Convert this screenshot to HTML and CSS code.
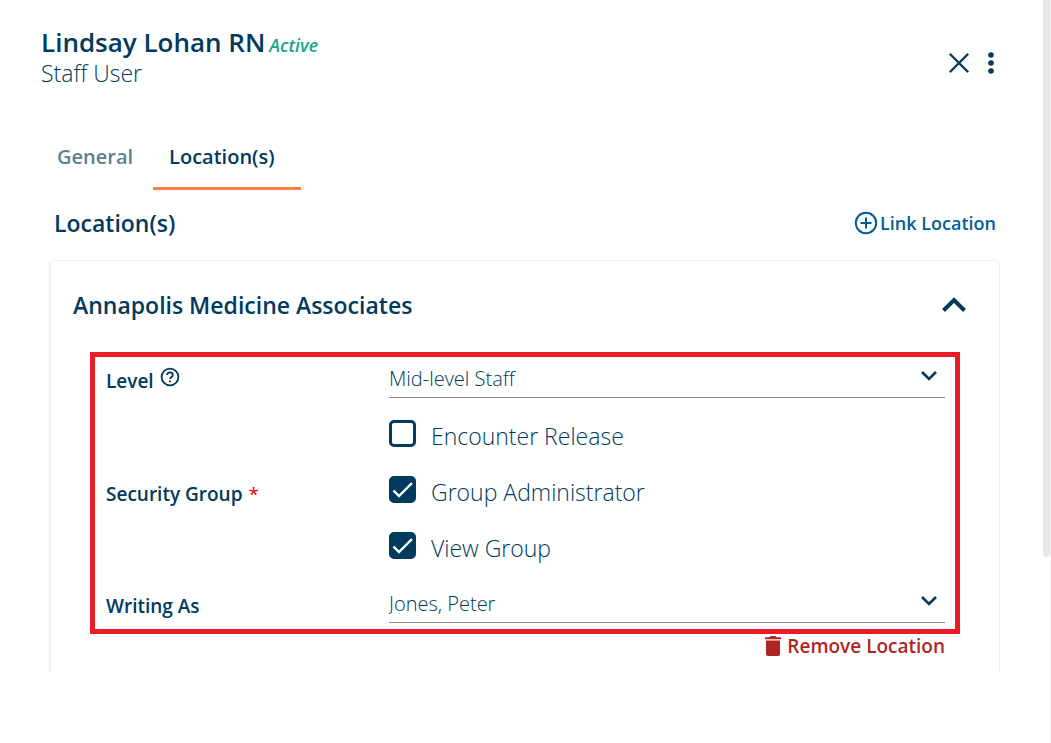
FILE: index.html
```html
<!DOCTYPE html>
<html lang="en">
<head>
  <meta charset="UTF-8">
  <meta name="viewport" content="width=device-width, initial-scale=1.0">
  <title>Staff User</title>
  <link rel="stylesheet" href="styles.css">
</head>
<body>
  <div class="page">
    <main class="content">
      <header class="header">
        <div>
          <div class="user-line">
            <h1 class="user-name">Lindsay Lohan RN</h1>
            <em class="status">Active</em>
          </div>
          <p class="user-role">Staff User</p>
        </div>
        <div class="header-actions">
          <button class="icon-btn" type="button" aria-label="Close">
            <svg width="20" height="20" viewBox="0 0 20 20" fill="none" stroke="currentColor" stroke-width="2.4" stroke-linecap="round"><path d="M1.5 1.5l17 17M18.5 1.5l-17 17"/></svg>
          </button>
          <button class="icon-btn" type="button" aria-label="More options">
            <svg width="6" height="22" viewBox="0 0 6 22" fill="currentColor"><circle cx="3" cy="3" r="2.8"/><circle cx="3" cy="11" r="2.8"/><circle cx="3" cy="19" r="2.8"/></svg>
          </button>
        </div>
      </header>

      <nav class="tabs">
        <button class="tab" type="button">General</button>
        <button class="tab tab-active" type="button">Location(s)</button>
      </nav>

      <div class="section-head">
        <h2 class="section-title">Location(s)</h2>
        <button class="link-btn" type="button">
          <svg width="24" height="24" viewBox="0 0 24 24" fill="none" stroke="currentColor" stroke-width="2"><circle cx="12" cy="12" r="10.2"/><path d="M12 6.5v11M6.5 12h11"/></svg>
          Link Location
        </button>
      </div>

      <div class="card-wrap">
        <section class="card">
          <div class="card-head">
            <h3 class="card-title">Annapolis Medicine Associates</h3>
            <button class="icon-btn" type="button" aria-label="Collapse">
              <svg width="24" height="16" viewBox="0 0 24 16" fill="none" stroke="currentColor" stroke-width="4"><path d="M1.5 13.5L12 3l10.5 10.5"/></svg>
            </button>
          </div>

          <form class="form">
            <div class="label-cell">
              <label for="level">Level</label>
              <svg class="help" width="20" height="20" viewBox="0 0 20 20" fill="none" stroke="currentColor" stroke-width="1.8"><circle cx="10" cy="10" r="8.4"/><path d="M7.2 8.1C7.2 6.3 8.4 5.4 10 5.4s2.8 1 2.8 2.5c0 2-2.7 2.2-2.7 4.2"/><path d="M10 13.4v1.9"/></svg>
            </div>
            <select class="select" id="level">
              <option>Mid-level Staff</option>
            </select>

            <div class="label-cell" id="security-label">Security Group <span class="required">*</span></div>
            <div class="checks" role="group" aria-labelledby="security-label">
              <label class="check"><input type="checkbox"><span>Encounter Release</span></label>
              <label class="check"><input type="checkbox" checked><span>Group Administrator</span></label>
              <label class="check"><input type="checkbox" checked><span>View Group</span></label>
            </div>

            <div class="label-cell"><label for="writing-as">Writing As</label></div>
            <select class="select" id="writing-as">
              <option>Jones, Peter</option>
            </select>
          </form>

          <div class="card-foot">
            <button class="remove-btn" type="button">
              <svg width="16" height="20" viewBox="0 0 16 20" fill="currentColor"><path d="M4.5 1.2L5.6 0h4.8l1.1 1.2H16v2H0v-2zM1 4.5h14V18a2 2 0 0 1-2 2H3a2 2 0 0 1-2-2z"/></svg>
              Remove Location
            </button>
          </div>
        </section>
      </div>
    </main>
    <div class="scroll-track"><div class="scroll-thumb"></div></div>
  </div>
</body>
</html>
```
FILE: styles.css
```css
* {
  box-sizing: border-box;
}
body {
  margin: 0;
  background: #fff;
  color: #003a5d;
  font-family: "Open Sans", "Noto Sans", sans-serif;
}
h1, h2, h3, p {
  margin: 0;
  font-weight: 600;
}
button {
  border: none;
  padding: 0;
  background: none;
  color: inherit;
  font: inherit;
  cursor: pointer;
}
svg {
  display: block;
  flex: none;
}
.page {
  display: flex;
  min-height: 100vh;
}
.content {
  flex: 1;
  min-width: 0;
  padding: 26px 43px 0 41px;
}

/* header */
.header {
  display: flex;
  justify-content: space-between;
  align-items: center;
  padding-right: 6px;
}
.user-line {
  display: flex;
  align-items: baseline;
  gap: 4px;
}
.user-name {
  font-size: 26px;
  line-height: 32px;
}
.status {
  color: #18a689;
  font-size: 18px;
  font-weight: 600;
}
.user-role {
  font-size: 23px;
  font-weight: 300;
  line-height: 30px;
}
.header-actions {
  display: flex;
  align-items: center;
  gap: 19px;
  padding-top: 12px;
}
.icon-btn {
  display: flex;
}

/* tabs */
.tabs {
  display: flex;
  margin-top: 38px;
}
.tab {
  height: 64px;
  padding: 0 20px 0 16px;
  border-bottom: 3px solid transparent;
  color: #5b7f95;
  font-size: 20px;
  font-weight: 600;
}
.tab-active {
  padding-right: 26px;
  border-bottom-color: #ff7f41;
  color: #003a5d;
}

.section-head {
  display: flex;
  justify-content: space-between;
  align-items: center;
  height: 70px;
  padding: 0 4px 4px 13px;
}
.section-title {
  font-size: 23px;
}
.link-btn {
  display: flex;
  align-items: center;
  gap: 2px;
  color: #005e95;
  font-size: 18px;
  font-weight: 600;
}

/* location card */
.card-wrap {
  overflow: hidden;
  padding: 1px 1px 0 10px;
}
.card {
  padding: 0 39px 14px;
  box-shadow: 0 1px 4px rgba(0, 0, 0, 0.2);
  clip-path: inset(-1px -4px 0 -4px);
}
.card-head {
  display: flex;
  justify-content: space-between;
  align-items: center;
  height: 91px;
  margin: 0 -6px 0 -17px;
  padding-bottom: 4px;
}
.card-title {
  font-size: 23px;
}
.form {
  display: grid;
  grid-template-columns: 283px 1fr;
  padding: 0 10px 6px 11px;
  border: 5px solid #ed1c24;
}
.label-cell {
  display: flex;
  align-items: center;
  gap: 6px;
  padding-top: 7px;
  font-size: 19px;
  font-weight: 600;
}
.help {
  margin-bottom: 8px;
}
.required {
  color: #f00000;
  font-weight: 400;
}
.select {
  width: 100%;
  height: 41px;
  padding: 2px 0 0;
  border: none;
  border-bottom: 1px solid #8c8c8c;
  border-radius: 0;
  appearance: none;
  background: url("data:image/svg+xml,%3Csvg xmlns='http://www.w3.org/2000/svg' width='16' height='10' fill='none' stroke='%23003a5d' stroke-width='2.6'%3E%3Cpath d='M1 1l7 7 7-7'/%3E%3C/svg%3E") no-repeat right 8px top 14px;
  color: inherit;
  font-family: inherit;
  font-size: 20px;
  font-weight: 300;
}
.checks {
  padding: 7px 0 9px;
}
.check {
  display: flex;
  align-items: center;
  gap: 15px;
  height: 56px;
  font-size: 23px;
  font-weight: 300;
}
.check span {
  padding-top: 6px;
}
.check input {
  width: 27px;
  height: 27px;
  margin: 0;
  border: 3px solid #003a5d;
  border-radius: 5px;
  appearance: none;
}
.check input:checked {
  background: #003a5d url("data:image/svg+xml,%3Csvg xmlns='http://www.w3.org/2000/svg' width='21' height='17' fill='none' stroke='%23fff' stroke-width='2.4'%3E%3Cpath d='M1.5 9.5l5.5 5.5L20 2'/%3E%3C/svg%3E") no-repeat center;
}
.card-foot {
  display: flex;
  justify-content: flex-end;
  padding-right: 15px;
}
.remove-btn {
  display: flex;
  align-items: center;
  gap: 6px;
  color: #ae2624;
  font-size: 19px;
  font-weight: 600;
  line-height: 24px;
}

.scroll-track {
  width: 8px;
  border-right: 1px solid #f4f4f4;
}
.scroll-thumb {
  height: 75vh;
  border-radius: 0 0 4px 4px;
  background: #e8e8e8;
}
```
